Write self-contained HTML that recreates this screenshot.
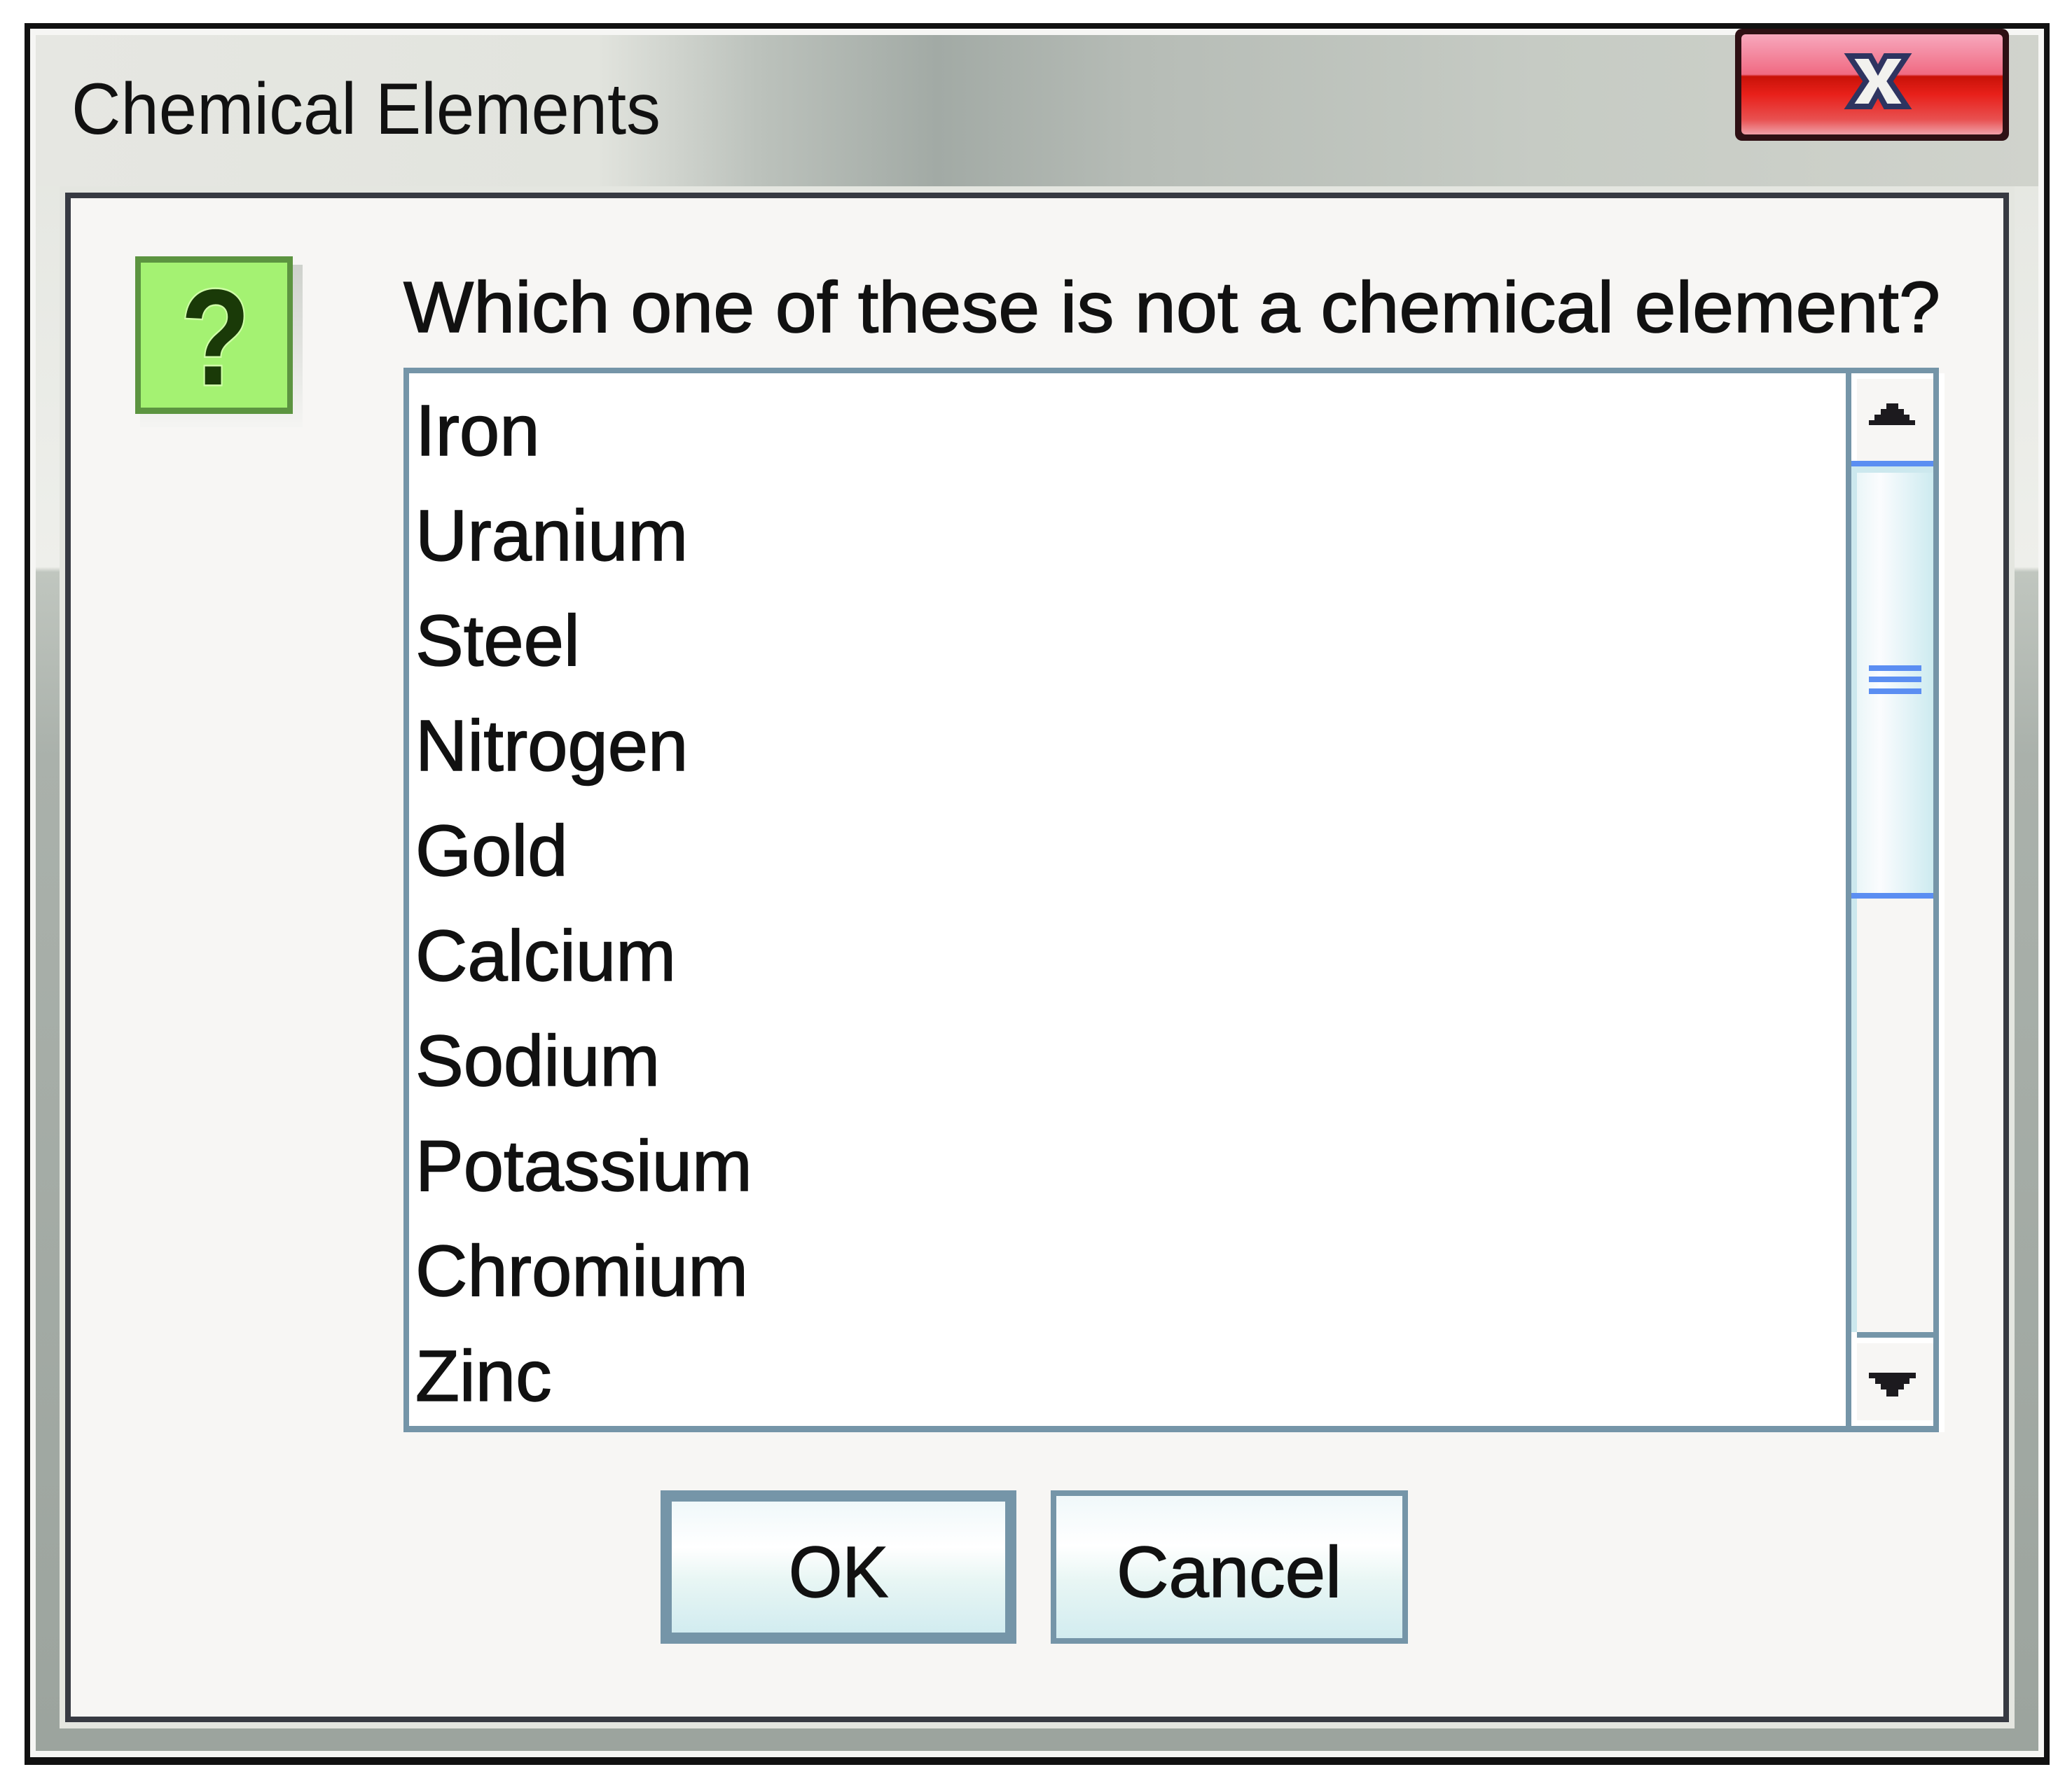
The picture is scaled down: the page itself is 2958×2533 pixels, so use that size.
<!DOCTYPE html>
<html><head><meta charset="utf-8"><style>
html,body{margin:0;padding:0;background:#fff;}
svg{display:block}
text{font-family:"Liberation Sans",sans-serif;fill:#111;}
</style></head><body>
<svg width="2958" height="2533" viewBox="0 0 2958 2533" xmlns="http://www.w3.org/2000/svg">
<defs>
<linearGradient id="tb" x1="0" y1="0" x2="1" y2="0">
<stop offset="0" stop-color="#e6e7e2"/>
<stop offset="0.28" stop-color="#e2e4de"/>
<stop offset="0.36" stop-color="#bcc2bc"/>
<stop offset="0.45" stop-color="#a2aaa5"/>
<stop offset="0.55" stop-color="#b6bcb6"/>
<stop offset="0.75" stop-color="#c6cbc4"/>
<stop offset="1" stop-color="#d0d3cc"/>
</linearGradient>
<linearGradient id="side" x1="0" y1="0" x2="0" y2="1">
<stop offset="0" stop-color="#e3e5df"/>
<stop offset="0.31" stop-color="#eeefeb"/>
<stop offset="0.313" stop-color="#c0c6bf"/>
<stop offset="0.42" stop-color="#aab1ab"/>
<stop offset="1" stop-color="#9ca49e"/>
</linearGradient>
<linearGradient id="btn" x1="0" y1="0" x2="0" y2="1">
<stop offset="0" stop-color="#f0f8fa"/>
<stop offset="0.35" stop-color="#ffffff"/>
<stop offset="0.6" stop-color="#e8f6f4"/>
<stop offset="1" stop-color="#d2ecf0"/>
</linearGradient>
<linearGradient id="thumb" x1="0" y1="0" x2="1" y2="0">
<stop offset="0" stop-color="#eaf6f8"/>
<stop offset="0.3" stop-color="#fbfcfe"/>
<stop offset="1" stop-color="#cdebf0"/>
</linearGradient>
<linearGradient id="close" x1="0" y1="0" x2="0" y2="1">
<stop offset="0" stop-color="#f7a8bd"/>
<stop offset="0.4" stop-color="#f06a82"/>
<stop offset="0.42" stop-color="#c81208"/>
<stop offset="0.6" stop-color="#e8201a"/>
<stop offset="0.85" stop-color="#e85050"/>
<stop offset="1" stop-color="#f0a0a8"/>
</linearGradient>
<linearGradient id="shadow" x1="0" y1="0" x2="0" y2="1">
<stop offset="0" stop-color="#c4c8c2"/>
<stop offset="1" stop-color="#f4f4f2"/>
</linearGradient>
</defs>

<rect x="35" y="33" width="2891" height="2487" fill="#111"/>
<rect x="43" y="41" width="2875" height="2468" fill="#f6f6f4"/>
<rect x="51" y="50" width="2859" height="2450" fill="url(#side)"/>
<rect x="51" y="50" width="2859" height="216" fill="url(#tb)"/>
<rect x="85" y="266" width="2791" height="2202" fill="#e4e6e0"/>
<rect x="93" y="275" width="2775" height="2184" fill="#373a42"/>
<rect x="101" y="283" width="2759" height="2168" fill="#f7f6f4"/>

<text x="102" y="191" font-size="104" textLength="841" lengthAdjust="spacingAndGlyphs">Chemical Elements</text>

<rect x="2477" y="41" width="391" height="160" rx="10" fill="#2e1014"/>
<rect x="2486" y="49" width="373" height="143" rx="6" fill="url(#close)"/>
<path d="M2640 80 L2670 80 L2681 100 L2692 80 L2722 80 L2698 116 L2722 152 L2692 152 L2681 132 L2670 152 L2640 152 L2664 116 Z" fill="#f2f2ee" stroke="#2e3460" stroke-width="8" stroke-linejoin="miter"/>

<rect x="200" y="378" width="232" height="232" fill="url(#shadow)" opacity="0.8"/>
<rect x="193" y="366" width="225" height="225" fill="#5c9440"/>
<rect x="201" y="375" width="209" height="207" fill="#a4f272"/>
<text x="258" y="549" font-size="195" font-weight="bold" textLength="99" lengthAdjust="spacingAndGlyphs" style="fill:#1a3a08;stroke:#d0ffa8;stroke-width:5;paint-order:stroke">?</text>

<text x="576" y="474" font-size="103" textLength="2194" lengthAdjust="spacingAndGlyphs" style="stroke:#111;stroke-width:1.5">Which one of these is not a chemical element?</text>

<rect x="576" y="525" width="2192" height="1520" fill="#7595a8"/>
<rect x="584" y="533" width="2051" height="1503" fill="#ffffff"/>
<g font-size="103" style="stroke:#111;stroke-width:1.5">
<text x="593" y="650">Iron</text>
<text x="593" y="800">Uranium</text>
<text x="593" y="950">Steel</text>
<text x="593" y="1100">Nitrogen</text>
<text x="593" y="1250">Gold</text>
<text x="593" y="1400">Calcium</text>
<text x="593" y="1550">Sodium</text>
<text x="593" y="1700">Potassium</text>
<text x="593" y="1850">Chromium</text>
<text x="593" y="2000">Zinc</text>
</g>

<rect x="2643" y="533" width="117" height="1503" fill="#ffffff"/>
<rect x="2651" y="541" width="109" height="117" fill="#f7f6f4"/>
<path d="M2693 576 L2710 576 L2710 584 L2718 584 L2718 592 L2726 592 L2726 600 L2734 600 L2734 607 L2668 607 L2668 600 L2676 600 L2676 592 L2685 592 L2685 584 L2693 584 Z" fill="#1c1a1e"/>
<rect x="2635" y="658" width="125" height="625" fill="#5b8ef2"/>
<rect x="2643" y="666" width="117" height="609" fill="#cce8ee"/>
<rect x="2651" y="675" width="109" height="600" fill="url(#thumb)"/>
<rect x="2668" y="950" width="75" height="8" fill="#5b8ef2"/>
<rect x="2668" y="966" width="75" height="8" fill="#5b8ef2"/>
<rect x="2668" y="983" width="75" height="8" fill="#5b8ef2"/>
<rect x="2651" y="1283" width="109" height="619" fill="#f7f6f4"/>
<rect x="2643" y="1283" width="8" height="619" fill="#cce8ee"/>
<rect x="2651" y="1902" width="109" height="8" fill="#7595a8"/>
<rect x="2651" y="1918" width="109" height="110" fill="#f7f6f4"/>
<path d="M2668 1960 L2735 1960 L2735 1968 L2726 1968 L2726 1976 L2718 1976 L2718 1984 L2710 1984 L2710 1994 L2693 1994 L2693 1984 L2685 1984 L2685 1976 L2677 1976 L2677 1968 L2668 1968 Z" fill="#1c1a1e"/>
<rect x="2635" y="533" width="8" height="1503" fill="#7595a8"/>
<rect x="2768" y="533" width="8" height="1512" fill="#ffffff"/>

<rect x="943" y="2128" width="508" height="219" fill="#7595a8"/>
<rect x="959" y="2144" width="476" height="187" fill="url(#btn)"/>
<text x="1126" y="2280" font-size="103" textLength="142" lengthAdjust="spacingAndGlyphs" style="stroke:#111;stroke-width:1.5">OK</text>
<rect x="1500" y="2128" width="510" height="219" fill="#7595a8"/>
<rect x="1508" y="2136" width="494" height="203" fill="url(#btn)"/>
<text x="1594" y="2280" font-size="103" textLength="321" lengthAdjust="spacingAndGlyphs" style="stroke:#111;stroke-width:1.5">Cancel</text>
</svg>
</body></html>
